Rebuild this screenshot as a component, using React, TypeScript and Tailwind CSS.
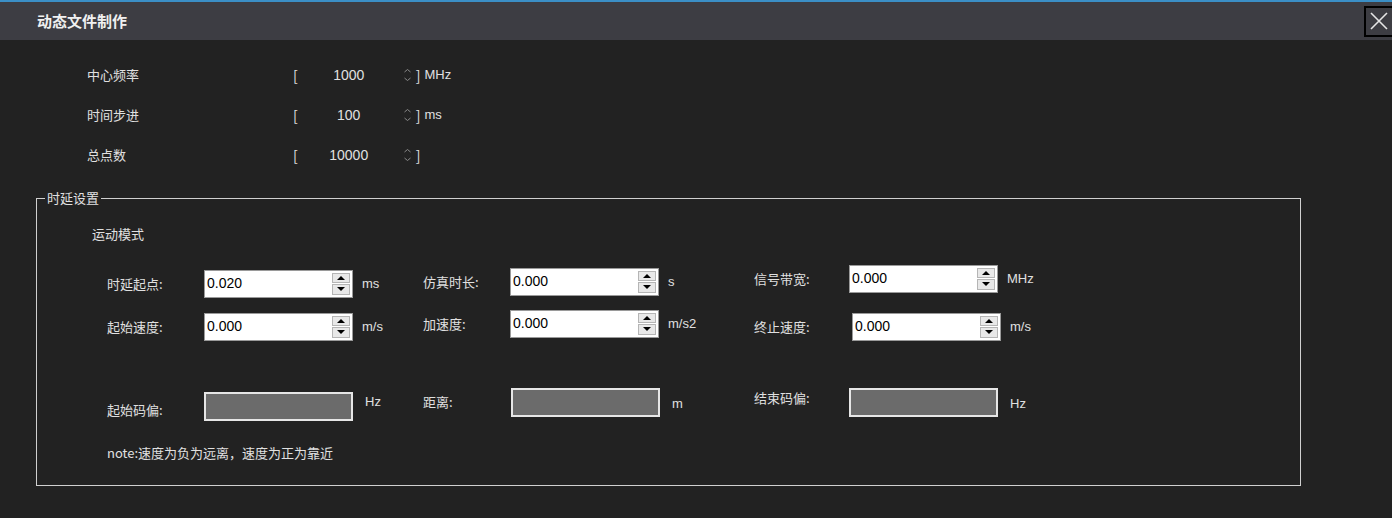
import React from "react";

const font = { fontFamily: '"Noto Sans CJK SC", "Liberation Sans", sans-serif' };
const latin = { fontFamily: '"Liberation Sans", sans-serif' };

const Spin: React.FC<{ value: string }> = ({ value }) => (
  <div className="flex h-[28px] w-[149px] items-center border border-[#9a9a9a] bg-white pl-[2px] pr-[2px]">
    <span className="flex-1 text-[14px] text-black" style={latin}>{value}</span>
    <div className="flex h-[22px] w-[18px] flex-col gap-[1px]">
      <div className="flex flex-1 items-center justify-center border border-[#b5b5b5] bg-[#e8e8e8]">
        <div className="h-0 w-0 border-x-[4px] border-b-[4px] border-x-transparent border-b-black" />
      </div>
      <div className="flex flex-1 items-center justify-center border border-[#b5b5b5] bg-[#e8e8e8]">
        <div className="h-0 w-0 border-x-[4px] border-t-[4px] border-x-transparent border-t-black" />
      </div>
    </div>
  </div>
);

const Gray = () => <div className="h-[29px] w-[149px] border-2 border-[#e6e6e6] bg-[#6b6b6b]" />;

const Field: React.FC<{ label: string; lw: string; unit: string; value: string; shift?: string }> = ({ label, lw, unit, value, shift }) => (
  <div className={`flex items-center ${shift ?? ""}`}>
    <span className={lw}>{label}</span>
    <Spin value={value} />
    <span className="ml-[9px] text-[13px]" style={latin}>{unit}</span>
  </div>
);

const TopRow: React.FC<{ label: string; value: string; unit: string }> = ({ label, value, unit }) => (
  <div className="flex h-[40px] items-center text-[13px] text-[#e0e0e0]">
    <span className="w-[206px] pl-[87px] box-content">{label}</span>
    <span className="text-[14px]">[</span>
    <span className="w-[102px] text-center text-[14px]" style={latin}>{value}</span>
    <svg width="9" height="16" viewBox="0 0 9 16" className="ml-[3px]">
      <path d="M1.5 5L4.5 2.5L7.5 5" fill="none" stroke="#8a8a8a" strokeWidth="1" />
      <path d="M1.5 11L4.5 13.5L7.5 11" fill="none" stroke="#8a8a8a" strokeWidth="1" />
    </svg>
    <span className="ml-[4px] text-[14px]">]</span>
    <span className="ml-[4px]" style={latin}>{unit}</span>
  </div>
);

export default function App() {
  return (
    <div className="h-[518px] w-[1392px] overflow-hidden bg-[#222222] text-[#e0e0e0]" style={font}>
      <div className="h-[2px] bg-[#3b8fc6]" />
      <div className="flex h-[38px] items-center justify-between bg-[#3d3d43]">
        <span className="pl-[37px] text-[15px] font-bold text-[#f0f0f0]">动态文件制作</span>
        <div className="mr-[-2px] flex h-[31px] w-[30px] items-center justify-center border-2 border-black">
          <svg width="20" height="20" viewBox="0 0 20 20"><path d="M2 2L18 18M18 2L2 18" stroke="#e6e6e6" strokeWidth="1.6" /></svg>
        </div>
      </div>
      <div className="pt-[15px]">
        <TopRow label="中心频率" value="1000" unit="MHz" />
        <TopRow label="时间步进" value="100" unit="ms" />
        <TopRow label="总点数" value="10000" unit="" />
      </div>
      <div className="relative ml-[36px] mt-[23px] h-[288px] w-[1265px] border border-[#d0d0d0] text-[13px]">
        <span className="absolute left-[8px] top-[-11px] bg-[#222222] px-[2px] leading-[20px]">时延设置</span>
        <div className="pl-[55px] pt-[25px]">运动模式</div>
        <div className="mt-[24px] grid grid-cols-[316px_331px_420px] pl-[70px]">
          <Field label="时延起点:" lw="w-[97px]" unit="ms" value="0.020" shift="translate-y-[2px]" />
          <Field label="仿真时长:" lw="w-[87px]" unit="s" value="0.000" />
          <Field label="信号带宽:" lw="w-[95px]" unit="MHz" value="0.000" shift="-translate-y-[3px]" />
        </div>
        <div className="mt-[14px] grid grid-cols-[316px_331px_420px] pl-[70px]">
          <Field label="起始速度:" lw="w-[97px]" unit="m/s" value="0.000" shift="translate-y-[3px]" />
          <Field label="加速度:" lw="w-[87px]" unit="m/s2" value="0.000" />
          <Field label="终止速度:" lw="w-[98px]" unit="m/s" value="0.000" shift="translate-y-[3px]" />
        </div>
        <div className="mt-[50px] grid grid-cols-[316px_331px_420px] pl-[70px]">
          <div className="flex translate-y-[4px] items-center"><span className="w-[97px] pt-[8px]">起始码偏:</span><Gray /><span className="ml-[12px] self-start" style={latin}>Hz</span></div>
          <div className="flex items-center"><span className="w-[88px]">距离:</span><Gray /><span className="ml-[12px] pt-[4px]" style={latin}>m</span></div>
          <div className="flex items-center"><span className="w-[95px] self-start">结束码偏:</span><Gray /><span className="ml-[12px] pt-[4px]" style={latin}>Hz</span></div>
        </div>
        <div className="pl-[70px] pt-[26px]">note:速度为负为远离，速度为正为靠近</div>
      </div>
    </div>
  );
}
